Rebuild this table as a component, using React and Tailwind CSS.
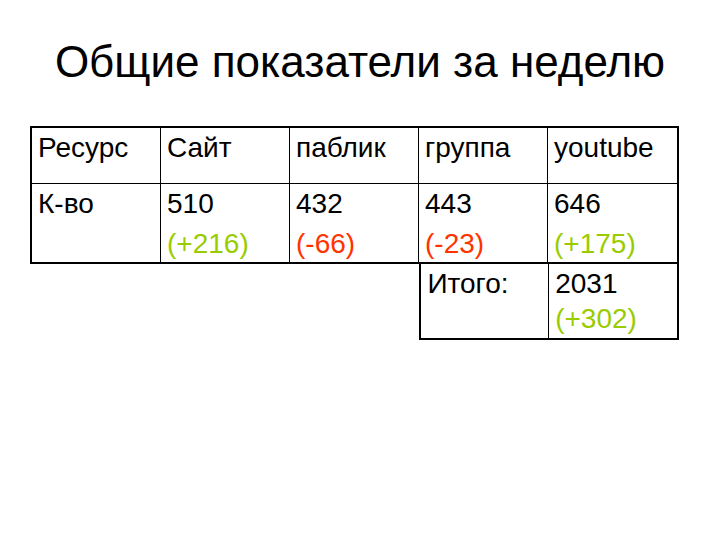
import React from 'react';

const heads = ['Ресурс', 'Сайт', 'паблик', 'группа', 'youtube'];

const counts = [
  { value: '510', delta: '(+216)', up: true },
  { value: '432', delta: '(-66)', up: false },
  { value: '443', delta: '(-23)', up: false },
  { value: '646', delta: '(+175)', up: true },
];

function Delta({ text, up }) {
  return <div className={up ? 'text-[#99cc00]' : 'text-[#ff3300]'}>{text}</div>;
}

export default function App() {
  return (
    <div
      className="w-[720px] h-[540px] bg-white text-black"
      style={{ fontFamily: '"Liberation Sans", Arial, sans-serif' }}
    >
      <h1 className="pt-[36px] text-center text-[44px] leading-[52px]">Общие показатели за неделю</h1>

      <div className="ml-[30px] mt-[38px] w-[649px] text-[28px] leading-[36px]">
        {/* main table */}
        <div className="border-2 border-black">
          <div className="grid grid-cols-5 h-[56px] border-b border-black">
            {heads.map((h, i) => (
              <div key={h} className={`pl-[6px] pt-[2px] ${i < 4 ? 'border-r border-black' : ''}`}>
                {h}
              </div>
            ))}
          </div>
          <div className="grid grid-cols-5 h-[78px] leading-[40px]">
            <div className="pl-[6px] border-r border-black">К-во</div>
            {counts.map((c, i) => (
              <div key={c.value} className={`pl-[6px] ${i < 3 ? 'border-r border-black' : ''}`}>
                <div>{c.value}</div>
                <Delta text={c.delta} up={c.up} />
              </div>
            ))}
          </div>
        </div>

        {/* total row */}
        <div className="grid grid-cols-5">
          <div className="col-start-4 col-span-2 grid grid-cols-2 h-[76px] border-2 border-t-0 border-black">
            <div className="pl-[6px] pt-[2px] border-r border-black">Итого:</div>
            <div className="pl-[6px] pt-[2px] leading-[35px]">
              <div>2031</div>
              <Delta text="(+302)" up />
            </div>
          </div>
        </div>
      </div>
    </div>
  );
}
